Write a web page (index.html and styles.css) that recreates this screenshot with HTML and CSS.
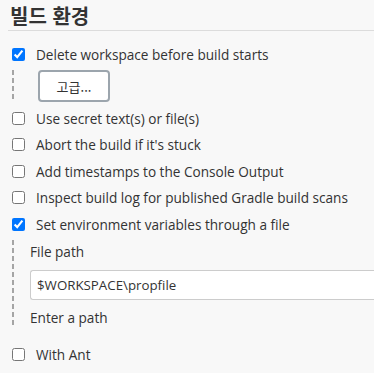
FILE: index.html
```html
<!DOCTYPE html>
<html lang="ko">
<head>
<meta charset="UTF-8" />
<meta name="viewport" content="width=device-width, initial-scale=1.0" />
<title>빌드 환경</title>
<link rel="stylesheet" href="styles.css">
</head>
<body>
<section class="section">
    <h2 class="section-title">빌드 환경</h2>

    <div class="option">
        <input type="checkbox" id="wsCleanup" checked>
        <label for="wsCleanup">Delete workspace before build starts</label>
    </div>
    <div class="nested nested-advanced">
        <button type="button" class="btn-advanced">고급...</button>
    </div>

    <div class="option">
        <input type="checkbox" id="secrets">
        <label for="secrets">Use secret text(s) or file(s)</label>
    </div>
    <div class="option">
        <input type="checkbox" id="timeout">
        <label for="timeout">Abort the build if it's stuck</label>
    </div>
    <div class="option">
        <input type="checkbox" id="timestamps">
        <label for="timestamps">Add timestamps to the Console Output</label>
    </div>
    <div class="option">
        <input type="checkbox" id="gradleScans">
        <label for="gradleScans">Inspect build log for published Gradle build scans</label>
    </div>
    <div class="option">
        <input type="checkbox" id="envFile" checked>
        <label for="envFile">Set environment variables through a file</label>
    </div>
    <div class="nested nested-field">
        <div class="field-label">File path</div>
        <input type="text" class="text-input" value="$WORKSPACE\propfile">
        <div class="field-help">Enter a path</div>
    </div>

    <div class="option option-last">
        <input type="checkbox" id="withAnt">
        <label for="withAnt">With Ant</label>
    </div>
</section>
</body>
</html>
```

FILE: styles.css
```css
:root{
    --text:#333;
    --bg:#f8f8f8;
    --rule:#dcdcdc;
    --dash:#a5a5a5;
}
html{overflow:hidden}
body{
    margin:0;
    padding:0 0 0 8px;
    background:var(--bg);
    color:var(--text);
    font-family:"Open Sans","Noto Sans CJK KR",sans-serif;
    font-size:13.6px;
}

/* ── Section header ── */
.section-title{
    margin:0 0 9.75px 0;
    padding:3px 0 0 2px;
    height:27px;
    font-family:"Noto Sans CJK KR","Open Sans",sans-serif;
    font-size:20px;
    font-weight:700;
    line-height:26px;
    border-bottom:1px solid var(--rule);
}

/* ── Checkbox rows ── */
.option{
    display:flex;
    align-items:center;
    height:26.5px;
}
.option input{
    margin:0 11px 0 4px;
    width:13px;
    height:13px;
}
.option label{white-space:nowrap}

/* ── Nested blocks with dashed guide ── */
.nested{
    margin-left:4px;
    background:repeating-linear-gradient(to bottom,var(--dash) 0 5px,transparent 5px 8px) no-repeat;
    background-size:2px 100%;
}
.nested-advanced{
    margin-top:2.75px;
    margin-bottom:2.75px;
    padding-left:26px;
    height:32px;
}
.nested-field{
    margin-top:2.75px;
    margin-bottom:13.75px;
    padding:3px 0 0 18px;
    height:84px;
}

.btn-advanced{
    width:72px;
    height:32px;
    background:#fff;
    border:2px solid #9ca5ad;
    border-radius:4px;
    color:var(--text);
    font-family:"Noto Sans CJK KR","Open Sans",sans-serif;
    font-size:13px;
}

.field-label{line-height:18px;margin-bottom:9px}
.text-input{
    display:block;
    box-sizing:border-box;
    width:100%;
    height:30px;
    margin:0;
    padding:0 6px;
    background:#fff;
    border:1px solid #ccc;
    border-right:none;
    border-radius:3px 0 0 3px;
    color:var(--text);
    font-family:inherit;
    font-size:13.3px;
}
.field-help{margin-top:9px;line-height:18px}
```
